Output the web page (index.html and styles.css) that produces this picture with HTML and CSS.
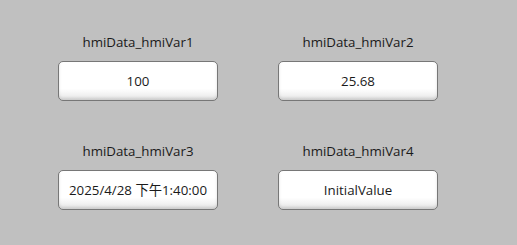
FILE: index.html
```html
<!DOCTYPE html>
<html lang="en">
  <head>
    <meta charset="UTF-8" />
    <title>HMI Data</title>
    <link rel="stylesheet" href="styles.css">
  </head>
  <body>
    <div class="panel">
      <div class="field">
        <div class="field-label">hmiData_hmiVar1</div>
        <div class="field-box">100</div>
      </div>
      <div class="field">
        <div class="field-label">hmiData_hmiVar2</div>
        <div class="field-box">25.68</div>
      </div>
      <div class="field">
        <div class="field-label">hmiData_hmiVar3</div>
        <div class="field-box">2025/4/28 下午1:40:00</div>
      </div>
      <div class="field">
        <div class="field-label">hmiData_hmiVar4</div>
        <div class="field-box">InitialValue</div>
      </div>
    </div>
  </body>
</html>
```

FILE: styles.css
```css
html,
body {
  margin: 0;
  height: 100%;
}
body {
  background-color: #c0c0c0;
  color: #1a1a1a;
  font-family: "Open Sans", "Noto Sans CJK SC", sans-serif;
  font-size: 13.3px;
}
.panel {
  display: grid;
  grid-template-columns: 160px 160px;
  column-gap: 60px;
  row-gap: 41px;
  padding: 33px 0 0 58px;
}
.field {
  display: flex;
  flex-direction: column;
}
.field-label {
  height: 18px;
  line-height: 18px;
  text-align: center;
  margin-bottom: 10px;
}
.field-box {
  box-sizing: border-box;
  height: 40px;
  padding-bottom: 1px;
  border: 1px solid #777;
  border-radius: 5px;
  background: linear-gradient(to bottom, #ffffff 0%, #ffffff 70%, #e6e6e6 100%);
  box-shadow: inset 0 -2px 3px rgba(0, 0, 0, 0.12);
  display: flex;
  align-items: center;
  justify-content: center;
  white-space: nowrap;
}
```
